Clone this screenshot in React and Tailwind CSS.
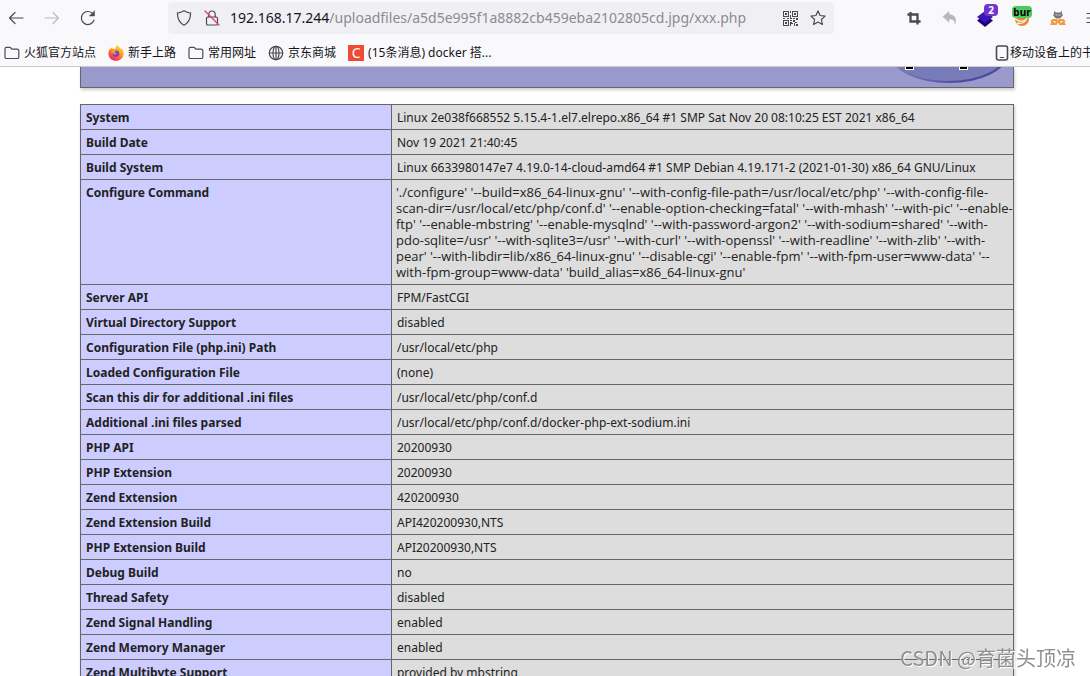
import React from 'react'

const configure = [
  "'./configure' '--build=x86_64-linux-gnu' '--with-config-file-path=/usr/local/etc/php' '--with-config-file-",
  "scan-dir=/usr/local/etc/php/conf.d' '--enable-option-checking=fatal' '--with-mhash' '--with-pic' '--enable-",
  "ftp' '--enable-mbstring' '--enable-mysqlnd' '--with-password-argon2' '--with-sodium=shared' '--with-",
  "pdo-sqlite=/usr' '--with-sqlite3=/usr' '--with-curl' '--with-openssl' '--with-readline' '--with-zlib' '--with-",
  "pear' '--with-libdir=lib/x86_64-linux-gnu' '--disable-cgi' '--enable-fpm' '--with-fpm-user=www-data' '--",
  "with-fpm-group=www-data' 'build_alias=x86_64-linux-gnu'",
].join('\n')

const rows = [
  ['System', 'Linux 2e038f668552 5.15.4-1.el7.elrepo.x86_64 #1 SMP Sat Nov 20 08:10:25 EST 2021 x86_64'],
  ['Build Date', 'Nov 19 2021 21:40:45'],
  ['Build System', 'Linux 6633980147e7 4.19.0-14-cloud-amd64 #1 SMP Debian 4.19.171-2 (2021-01-30) x86_64 GNU/Linux'],
  ['Configure Command', configure],
  ['Server API', 'FPM/FastCGI'],
  ['Virtual Directory Support', 'disabled'],
  ['Configuration File (php.ini) Path', '/usr/local/etc/php'],
  ['Loaded Configuration File', '(none)'],
  ['Scan this dir for additional .ini files', '/usr/local/etc/php/conf.d'],
  ['Additional .ini files parsed', '/usr/local/etc/php/conf.d/docker-php-ext-sodium.ini'],
  ['PHP API', '20200930'],
  ['PHP Extension', '20200930'],
  ['Zend Extension', '420200930'],
  ['Zend Extension Build', 'API420200930,NTS'],
  ['PHP Extension Build', 'API20200930,NTS'],
  ['Debug Build', 'no'],
  ['Thread Safety', 'disabled'],
  ['Zend Signal Handling', 'enabled'],
  ['Zend Memory Manager', 'enabled'],
  ['Zend Multibyte Support', 'provided by mbstring'],
]

const Icon = ({ children, className = 'size-4' }) => (
  <svg
    viewBox="0 0 16 16"
    className={className}
    fill="none"
    stroke="currentColor"
    strokeWidth="1.2"
    strokeLinecap="round"
    strokeLinejoin="round"
    aria-hidden="true"
  >
    {children}
  </svg>
)

const FolderIcon = () => (
  <Icon className="size-4 text-[#4a4a50]">
    <path d="M1 4c0-1 .6-1.6 1.6-1.6h3c.8 0 1.1.3 1.6.9l.7.9h5.3c1 0 1.6.6 1.6 1.5v6.2c0 1-.6 1.6-1.6 1.6H2.6c-1 0-1.6-.6-1.6-1.6z" />
  </Icon>
)

const FirefoxIcon = () => (
  <svg viewBox="0 0 16 16" className="size-4" aria-hidden="true">
    <defs>
      <linearGradient id="fox" x1="0.8" y1="0" x2="0.2" y2="1">
        <stop offset="0" stopColor="#ffe226" />
        <stop offset="0.45" stopColor="#ff9a1f" />
        <stop offset="0.75" stopColor="#ff4a3d" />
        <stop offset="1" stopColor="#e31587" />
      </linearGradient>
    </defs>
    <path
      d="M9.5 0c.4 1.5 1.3 2.1 2.3 3 .6.5 1 1 1.2 1.5-.1-.8-.2-1.2-.4-1.6C14.5 4 15.7 6.2 15.7 8.5c0 4.1-3.4 7.3-7.6 7.3S.4 12.6.4 8.4c0-2 .7-3.7 1.7-4.9 0 .5 0 .8.2 1C2.7 3.5 3.4 2.7 4 2.2c0 .7.2 1.3.5 1.7C6 3.4 7 3.7 7.7 4.2 7.6 2.6 8.3 1 9.5 0z"
      fill="url(#fox)"
    />
    <circle cx="8" cy="8.7" r="3.3" fill="#7540d8" />
    <path d="M4.5 5.5c1.5-.5 2.5 0 3.5 1-.8.1-1.5.6-1.7 1.3 1 .2 1.7 0 2.4.6-.6 1.3-3 1.3-4.2-.4z" fill="#ff9f24" />
  </svg>
)

const GlobeIcon = () => (
  <Icon className="size-4 text-[#4a4a50]">
    <circle cx="8" cy="8" r="6.7" />
    <ellipse cx="8" cy="8" rx="3" ry="6.7" />
    <path d="M1.3 8h13.4M8 1.3v13.4" />
  </Icon>
)

const QrIcon = () => (
  <svg viewBox="0 0 15 15" className="size-[15px]" fill="currentColor" shapeRendering="crispEdges" aria-hidden="true">
    <path
      fillRule="evenodd"
      d="M0 0h6v6H0zm1 1v4h4V1zM9 0h6v6H9zm1 1v4h4V1zM0 9h6v6H0zm1 1v4h4v-4zM2 2h2v2H2zM11 2h2v2h-2zM2 11h2v2H2zM7 0h1v2H7zM7 4h1v3h1v1H7zM0 7h2v1H0zM4 7h2v1H4zM10 7h2v1h-2zM13 7h2v2h-2zM7 9h2v1H7zM10 9h2v2h-2zM8 11h1v1h1v1H8v2H7v-4h1zM12 11h2v1h-2zM11 12h1v3h-1zM13 13h2v2h-2z"
    />
  </svg>
)

const ToolButton = ({ label, className = '', children }) => (
  <button type="button" aria-label={label} className={`flex size-6 shrink-0 items-center justify-center ${className}`}>
    {children}
  </button>
)

const Bookmark = ({ icon, children }) => (
  <a href="#" className="flex shrink-0 items-center gap-1 whitespace-nowrap">
    {icon}
    {children}
  </a>
)

const NavBar = () => (
  <div className="flex h-9 items-center gap-3 pl-1 text-[#4a4a50]">
    <ToolButton label="Back">
      <Icon>
        <path d="M15 8H1.5M7 2.5L1.5 8 7 13.5" />
      </Icon>
    </ToolButton>
    <ToolButton label="Forward" className="text-[#bbbbc0]">
      <Icon>
        <path d="M1 8h13.5M9 2.5L14.5 8 9 13.5" />
      </Icon>
    </ToolButton>
    <ToolButton label="Reload">
      <Icon>
        <path d="M14 10.2A6.5 6.5 0 1 1 13 4" />
        <path d="M14.5 1v5h-5z" fill="currentColor" strokeWidth="0.5" />
      </Icon>
    </ToolButton>

    <div className="mx-14 flex h-8 min-w-0 flex-1 items-center gap-1 rounded bg-[#f0f0f4] px-1">
      <ToolButton label="Tracking protection">
        <Icon>
          <path d="M8 .8c2 1.3 4 2 6.6 2.3 0 5.6-1.6 9.6-6.6 12.1C3 12.7 1.4 8.7 1.4 3.1 4 2.8 6 2.1 8 .8z" />
        </Icon>
      </ToolButton>
      <ToolButton label="Connection is not secure">
        <Icon>
          <rect x="2.5" y="7" width="11" height="8" rx="1.3" />
          <path d="M4.8 7V4.2a3.2 3.2 0 0 1 6.4 0V7" />
          <path d="M1 1l14 14" stroke="#e8396b" />
        </Icon>
      </ToolButton>
      <div className="relative h-6 min-w-0 flex-1 text-[14px]/6">
        <div aria-hidden="true" className="truncate pl-0.5 text-[#8b8b92]">
          <span className="text-[#15141a]">192.168.17.244</span>/uploadfiles/a5d5e995f1a8882cb459eba2102805cd.jpg/xxx.php
        </div>
        {/* The input sits over the coloured address so that only the host is dark */}
        <input
          aria-label="Address"
          defaultValue="192.168.17.244/uploadfiles/a5d5e995f1a8882cb459eba2102805cd.jpg/xxx.php"
          className="absolute inset-0 w-full bg-transparent pl-0.5 text-transparent outline-none"
        />
      </div>
      <ToolButton label="QR code">
        <QrIcon />
      </ToolButton>
      <ToolButton label="Bookmark this page">
        <Icon>
          <path d="M8 .9l2.1 4.6 5 .6-3.7 3.4 1 5L8 12l-4.4 2.5 1-5L.9 6.1l5-.6z" />
        </Icon>
      </ToolButton>
    </div>

    <div className="flex shrink-0 items-center gap-3">
      <ToolButton label="Screenshot">
        <Icon className="size-[14px]">
          <path d="M4 1v11h11.5M.5 4H12v11.5" strokeWidth="2.6" strokeLinecap="butt" strokeLinejoin="miter" />
        </Icon>
      </ToolButton>
      <ToolButton label="Undo" className="text-[#b8b8bc]">
        <Icon>
          <path d="M1 6.5L7 1.5v3c5 0 8 3.5 6 9.5 0-3.5-2-5-6-5v3z" fill="currentColor" strokeWidth="0.5" />
        </Icon>
      </ToolButton>
      <ToolButton label="Layers extension" className="relative">
        <svg viewBox="0 0 20 20" className="size-5" aria-hidden="true">
          <path d="M9 7l8 5.5L9 19 1 12.5z" fill="#1c0074" />
          <path d="M9 3l8 6L9 15 1 9z" fill="#3d14b8" />
        </svg>
        <span className="absolute -top-0.5 right-0 rounded-sm bg-[#6f35d0] px-1 text-[10px]/3 font-bold text-white">2</span>
      </ToolButton>
      <ToolButton label="Burp proxy" className="relative">
        <svg viewBox="0 0 20 20" className="size-5" aria-hidden="true">
          <circle cx="10" cy="11" r="7" fill="#e0893a" />
          <path d="M3 10c3 4 9 5 13-1M5 15c4 1 7 0 9-3" fill="none" stroke="#fff0d8" strokeWidth="1.3" />
        </svg>
        <span className="absolute top-0 rounded-sm bg-[#4fc860] px-px text-[10px]/3 font-bold text-black">bur</span>
      </ToolButton>
      <ToolButton label="User agent">
        <svg viewBox="0 0 16 16" className="size-4" aria-hidden="true">
          <path d="M4 1l2 1.5h4L12 1v3l1 1-1 1.5L10 8.5H6L4 6.5 3 5l1-1z" fill="#77777b" />
          <path d="M5.5 5h2M8.5 5h2" stroke="#d0d0d4" />
          <path d="M2.5 9h4.5l1 1.5L9 9h4.5l2 2-1 1 1.5 3H9.5L8 12.5 6.5 15H0l1.5-3-1-1z" fill="#f09a42" />
          <path d="M3.5 11.5h1.5v1.5M12.5 11.5H11v1.5" fill="none" stroke="#fff" />
        </svg>
      </ToolButton>
    </div>
    <button type="button" aria-label="Menu" className="ml-1 w-1 shrink-0 overflow-hidden">
      <Icon className="size-4 max-w-none">
        <path d="M1 3.5h14M1 8h14M1 12.5h14" />
      </Icon>
    </button>
  </div>
)

const BookmarkBar = () => (
  <div className="flex h-[30px] items-center justify-between overflow-hidden pt-1 pl-1 text-[12px]/4 text-[#15141a]">
    <nav aria-label="Bookmarks" className="flex items-center gap-3">
      <Bookmark icon={<FolderIcon />}>火狐官方站点</Bookmark>
      <Bookmark icon={<FirefoxIcon />}>新手上路</Bookmark>
      <Bookmark icon={<FolderIcon />}>常用网址</Bookmark>
      <Bookmark icon={<GlobeIcon />}>京东商城</Bookmark>
      <Bookmark
        icon={
          <span className="flex size-4 items-center justify-center bg-[#f04c35] text-[14px]/4 text-white" aria-hidden="true">
            C
          </span>
        }
      >
        (15条消息) docker 搭...
      </Bookmark>
    </nav>
    <div className="w-24 shrink-0 overflow-hidden">
      <a href="#" className="flex w-max items-center whitespace-nowrap">
        <Icon className="size-4 text-[#4a4a50]">
          <rect x="2.5" y="1" width="11" height="14" rx="2" strokeWidth="1.6" />
          <path d="M6.5 12.5h3" />
        </Icon>
        移动设备上的书签
      </a>
    </div>
  </div>
)

const PhpLogo = () => (
  <svg viewBox="0 0 120 20" className="h-5 w-[120px]" aria-hidden="true">
    <defs>
      <linearGradient id="edge" x1="0" x2="1">
        <stop offset="0" stopColor="#7c80b8" />
        <stop offset="0.6" stopColor="#484c99" />
      </linearGradient>
    </defs>
    <ellipse cx="60" cy="-15" rx="60" ry="31" fill="url(#edge)" />
    <ellipse cx="59" cy="-17" rx="60" ry="31" fill="#777bb7" />
    <path d="M16 0h9v3h-9zM70 0h9v3h-9z" fill="#fff" />
    <path d="M17 0h7v2h-7zM71 0h7v2h-7z" fill="#000" />
  </svg>
)

const InfoTable = () => (
  <table className="w-full table-fixed border-collapse bg-[#dddddd] text-[12px]/4 text-[#222222] shadow-[1px_2px_3px_#cccccc]">
    <tbody>
      {rows.map(([name, value]) => (
        <tr key={name}>
          <th
            scope="row"
            className="w-1/3 border border-[#666666] bg-[#ccccff] pt-[5px] pb-[3px] pl-[5px] text-left align-top font-bold"
          >
            {name}
          </th>
          {value === configure ? (
            <td className="border border-[#666666] py-1 pl-1 align-top font-['Open_Sans',sans-serif] text-[13px]/4 whitespace-pre">
              {value}
            </td>
          ) : (
            <td className="border border-[#666666] pt-[5px] pb-[3px] pl-[5px] align-top">{value}</td>
          )}
        </tr>
      ))}
    </tbody>
  </table>
)

export default function App() {
  return (
    <div className="flex h-screen flex-col overflow-hidden bg-white font-['Noto_Sans','Noto_Sans_CJK_SC',sans-serif]">
      <header className="shrink-0 border-b border-[#cccccc] bg-[#f9f9fb]">
        <NavBar />
        <BookmarkBar />
      </header>
      <main className="min-h-0 flex-1 overflow-hidden pr-[76px] pl-20">
        <div className="mb-4 flex justify-end border border-t-0 border-[#666666] bg-[#9999cc] pr-1 shadow-[1px_2px_3px_#cccccc]">
          <PhpLogo />
        </div>
        <InfoTable />
      </main>
      <div className="pointer-events-none fixed right-3.5 bottom-1 font-['Noto_Sans_CJK_SC',sans-serif] text-[20px]/7 text-[#8f8f8f] [text-shadow:1px_1px_0_#ffffff]">
        CSDN @育菌头顶凉
      </div>
    </div>
  )
}
